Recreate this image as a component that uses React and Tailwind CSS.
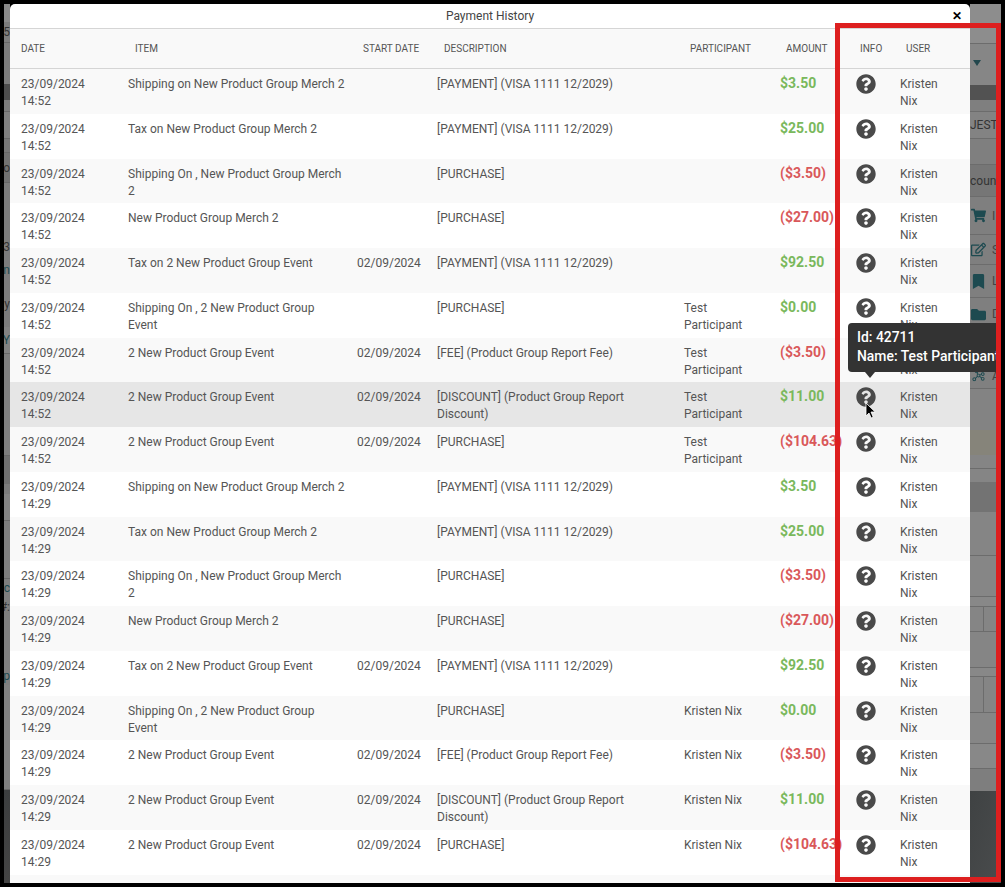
import { FaQuestionCircle, FaShoppingCart, FaFolder, FaRegEdit, FaBookmark } from 'react-icons/fa';
import { PiGraph } from 'react-icons/pi';

const FONT = { fontFamily: 'Roboto, sans-serif' };

const HEADERS = [
  { label: 'Date', className: 'pl-[11px]' },
  { label: 'Item', className: 'pl-[18px]' },
  { label: 'Start Date', className: 'pl-[17px]' },
  { label: 'Description', className: 'pl-[18px]' },
  { label: 'Participant', className: 'pl-[17px]' },
  { label: 'Amount', className: 'pl-[17px]' },
  { label: 'Info', className: 'pl-[15px]' },
  { label: 'User', className: 'pl-[17px]' },
];

const GROUP = (time, who) => [
  { time, item: 'Shipping on New Product Group Merch 2', desc: '[PAYMENT] (VISA 1111 12/2029)', amount: '$3.50' },
  { time, item: 'Tax on New Product Group Merch 2', desc: '[PAYMENT] (VISA 1111 12/2029)', amount: '$25.00' },
  { time, item: 'Shipping On , New Product Group Merch 2', desc: '[PURCHASE]', amount: '($3.50)' },
  { time, item: 'New Product Group Merch 2', desc: '[PURCHASE]', amount: '($27.00)' },
  { time, item: 'Tax on 2 New Product Group Event', start: '02/09/2024', desc: '[PAYMENT] (VISA 1111 12/2029)', amount: '$92.50' },
  { time, item: 'Shipping On , 2 New Product Group Event', desc: '[PURCHASE]', who, amount: '$0.00' },
  { time, item: '2 New Product Group Event', start: '02/09/2024', desc: '[FEE] (Product Group Report Fee)', who, amount: '($3.50)' },
  { time, item: '2 New Product Group Event', start: '02/09/2024', desc: '[DISCOUNT] (Product Group Report Discount)', who, amount: '$11.00' },
  { time, item: '2 New Product Group Event', start: '02/09/2024', desc: '[PURCHASE]', who, amount: '($104.63)' },
];

const ROWS = [...GROUP('14:52', 'Test Participant'), ...GROUP('14:29', 'Kristen Nix')];

const COLS = 'grid grid-cols-[107px_229px_80px_247px_96px_76px_44px_81px]';

// page behind the modal, left edge: only the last pixels of each glyph show
const LEFT_BANDS = [
  { h: 18, bg: 'bg-[#8a8a8a]' },
  { h: 21, bg: 'bg-[#7d7d7d]', text: '5', line: true },
  { h: 41, bg: 'bg-[#7c7c7c]' },
  { h: 16, bg: 'bg-[#4d4d4d]' },
  { h: 12, bg: 'bg-[#7c7c7c]', line: true },
  { h: 27, bg: 'bg-[#808080]', line: true },
  { h: 14, bg: 'bg-[#777]', line: true },
  { h: 30, bg: 'bg-[#727272]', text: 'o', line: true },
  { h: 52, bg: 'bg-[#7c7c7c]' },
  { h: 24, bg: 'bg-[#7c7c7c]', text: '3' },
  { h: 22, bg: 'bg-[#7c7c7c]', text: 'n', teal: true },
  { h: 46, bg: 'bg-[#7c7c7c]', text: 'y' },
  { h: 27, bg: 'bg-[#828282]', text: 'Y', teal: true, line: true },
  { h: 102, bg: 'bg-[#7e7e7e]', line: true },
  { h: 28, bg: 'bg-[#707070]' },
  { h: 10, bg: 'bg-[#7c7c7c]' },
  { h: 27, bg: 'bg-[#848484]', line: true },
  { h: 58, bg: 'bg-[#7e7e7e]', line: true },
  { h: 18, bg: 'bg-[#7e7e7e]', text: 'rc', teal: true },
  { h: 20, bg: 'bg-[#7e7e7e]', text: '#:' },
  { h: 50, bg: 'bg-[#7e7e7e]' },
  { h: 18, bg: 'bg-[#7e7e7e]', text: 'p', teal: true },
  { h: 105, bg: 'bg-[#808080]', line: true },
];

const RIGHT_BANDS = [
  { h: 40, bg: 'bg-[#8d8d8d]', line: true },
  { h: 41, bg: 'bg-[#868686]', caret: true },
  { h: 15, bg: 'bg-[#525252]' },
  { h: 12, bg: 'bg-[#7f7f7f]', line: true },
  { h: 27, bg: 'bg-[#838383]', text: 'JEST', line: true },
  { h: 26, bg: 'bg-[#7f7f7f]', line: true },
  { h: 32, bg: 'bg-[#767676]', text: 'coun', line: true },
  { h: 38, bg: 'bg-[#7f7f7f]', line: true, icon: <FaShoppingCart size={15} />, letter: 'I' },
  { h: 30, bg: 'bg-[#7f7f7f]', line: true, icon: <FaRegEdit size={15} />, letter: 'S' },
  { h: 33, bg: 'bg-[#7f7f7f]', line: true, icon: <FaBookmark size={15} />, letter: 'L' },
  { h: 32, bg: 'bg-[#7f7f7f]', icon: <FaFolder size={15} />, letter: 'D' },
  { h: 33, bg: 'bg-[#808080]' },
  { h: 26, bg: 'bg-[#808080]', line: true, icon: <PiGraph size={15} />, letter: 'A' },
  { h: 41, bg: 'bg-[#838383]' },
  { h: 25, bg: 'bg-[#86847a]' },
  { h: 14, bg: 'bg-[#858585]', line: true },
  { h: 13, bg: 'bg-[#858585]' },
  { h: 30, bg: 'bg-[#737373]' },
  { h: 44, bg: 'bg-[#858585]', line: true },
  { h: 41, bg: 'bg-[#868686]', line: true },
  { h: 10, bg: 'bg-[#888]', line: true },
  { h: 25, bg: 'bg-[#858585]', line: true, split: true },
  { h: 36, bg: 'bg-[#858585]', line: true },
  { h: 9, bg: 'bg-[#888]', line: true },
  { h: 36, bg: 'bg-[#858585]', line: true, split: true },
  { h: 31, bg: 'bg-[#868686]', line: true },
  { h: 25, bg: 'bg-[#888]', line: true },
  { h: 22, bg: 'bg-[#7e7e7e]' },
];

function Row({ row, index }) {
  const hovered = index === 7;
  const bg = hovered ? 'bg-[#e6e6e6]' : index % 2 === 0 ? 'bg-[#f9f9f9]' : 'bg-white';
  const negative = row.amount.startsWith('(');
  return (
    <div className={`${COLS} ${bg} h-[44.75px] shrink-0 pt-[7px] text-[12px] leading-[17px] text-[#555]`}>
      <div className="pl-[11px]"><div className="w-[70px]">23/09/2024 {row.time}</div></div>
      <div className="pl-[11px]">{row.item}</div>
      <div className="pl-[11px]">{row.start}</div>
      <div className="pl-[11px]"><div className="w-[215px]">{row.desc}</div></div>
      <div className="pl-[11px]"><div className="w-[70px]">{row.who}</div></div>
      <div className={`pl-[11px] -mt-[1px] whitespace-nowrap text-[14px] font-bold leading-[16px] ${negative ? 'text-[#d9585a]' : 'text-[#7ab85c]'}`}>{row.amount}</div>
      <div className="pl-[11px] -mt-[2px]"><FaQuestionCircle size={20} className="text-[#4a4a4a]" /></div>
      <div className="pl-[11px]"><div className="w-[50px]">Kristen Nix</div></div>
    </div>
  );
}

function LeftStrip() {
  return (
    <div className="w-[6px] shrink-0 flex flex-col overflow-hidden text-[12px] text-[#333]">
      {LEFT_BANDS.map((b, i) => (
        <div
          key={i}
          style={{ height: b.h }}
          className={`${b.bg} ${b.line ? 'border-b border-[#686868]' : ''} ${b.teal ? 'text-[#1c4a50]' : ''} shrink-0 flex items-center justify-end whitespace-nowrap`}
        >
          {b.text}
        </div>
      ))}
      <div className="flex-1 bg-gradient-to-b from-[#3c3e3f] to-[#444]" />
    </div>
  );
}

function RightStrip() {
  return (
    <div className="w-[31px] shrink-0 flex flex-col overflow-hidden text-[12px] text-[#333]">
      {RIGHT_BANDS.map((b, i) => (
        <div
          key={i}
          style={{ height: b.h }}
          className={`${b.bg} ${b.line ? 'border-b border-[#6c6c6c]' : ''} shrink-0 flex items-center whitespace-nowrap`}
        >
          {b.caret && <div className="ml-[3px] -mt-[4px] w-0 h-0 border-x-[4px] border-x-transparent border-t-[6px] border-t-[#23474d]" />}
          {b.text}
          {b.icon && <span className="w-[22px] pl-[1px] text-[#1d4a50]">{b.icon}</span>}
          {b.letter && <span className="text-[#444]">{b.letter}</span>}
          {b.split && <div className="ml-[13px] h-full border-l border-[#6c6c6c]" />}
        </div>
      ))}
      <div className="flex-1 bg-gradient-to-br from-[#3f4243] to-[#4a4c4d]" />
    </div>
  );
}

export default function App() {
  return (
    <div className="relative w-[1005px] h-[887px] overflow-hidden bg-black p-[4px]" style={FONT}>
      <div className="flex h-full">
        <LeftStrip />
        <div className="flex-1 min-w-0 flex flex-col bg-white rounded-t-[5px] overflow-hidden">
          <div className="h-[25px] shrink-0 flex items-center border-b border-[#d5d5d5] pl-[18px] pr-[8px] text-[#444]">
            <div className="flex-1 text-center text-[12px]">Payment History</div>
            <span className="text-[12px] font-bold leading-none text-black">✕</span>
          </div>
          <div className={`${COLS} h-[40px] shrink-0 items-center bg-[#f9f9f9] border-b border-[#d5d5d5] text-[10px] uppercase text-[#555]`}>
            {HEADERS.map(h => <div key={h.label} className={`${h.className} whitespace-nowrap`}>{h.label}</div>)}
          </div>
          <div className="flex-1 min-h-0 flex flex-col overflow-hidden">
            {ROWS.map((row, i) => <Row key={i} row={row} index={i} />)}
            <div className="flex-1 bg-[#f9f9f9]" />
          </div>
        </div>
        <RightStrip />
      </div>

      {/* tooltip over the hovered info icon */}
      <div className="absolute left-[848px] top-[323px] w-[152px] h-[49px] rounded-l-[4px] bg-[#333] pl-[9px] pt-[5px] text-[13.9px] leading-[19px] font-medium text-white whitespace-nowrap overflow-hidden">
        <div>Id: 42711</div>
        <div>Name: Test Participant</div>
      </div>
      <div className="absolute left-[865px] top-[372px] w-0 h-0 border-x-[5px] border-x-transparent border-t-[6px] border-t-[#333]" />

      {/* mouse cursor */}
      <svg className="absolute left-[865px] top-[402px]" width="12" height="18" viewBox="0 0 12 18">
        <path d="M1 1v13l3-3 2.2 5 2-1-2.2-5h4.2z" fill="#000" stroke="#fff" strokeWidth="0.8" />
      </svg>

      {/* red annotation frame */}
      <div className="absolute left-[835px] top-[23px] w-[166px] h-[859px] border-[5px] border-[#dd1f1f]" />
    </div>
  );
}
